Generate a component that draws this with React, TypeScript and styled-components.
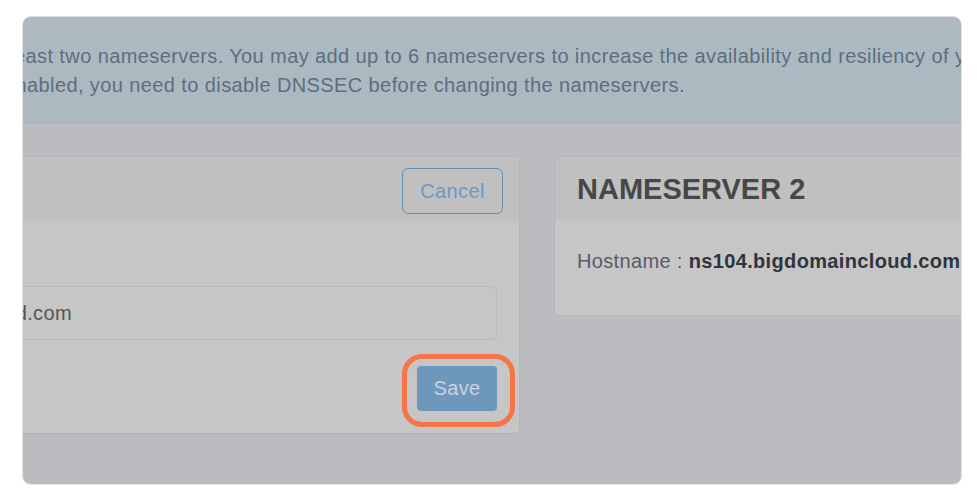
import { createGlobalStyle } from 'styled-components'
import styled from 'styled-components'

const GlobalStyle = createGlobalStyle`
   html, body {
      margin: 0;
      background: #ffffff;
      font-family: 'Liberation Sans', Arial, sans-serif;
   }
`

const App = () => {
   return (
      <>
         <GlobalStyle />
         <Frame>
            <Banner>
               <BannerLine $shift={-9}>
                  east two nameservers. You may add up to 6 nameservers to increase the availability and resiliency of your domain.
               </BannerLine>
               <BannerLine $shift={-7.5}>
                  nabled, you need to disable DNSSEC before changing the nameservers.
               </BannerLine>
            </Banner>

            <Cards>
               <Card>
                  <CardHeader $align='end'>
                     <CancelButton>Cancel</CancelButton>
                  </CardHeader>
                  <EditBody>
                     <Input readOnly value='ns103.bigdomaincloud.com' />
                     <Actions>
                        <Highlight>
                           <SaveButton>Save</SaveButton>
                        </Highlight>
                     </Actions>
                  </EditBody>
               </Card>

               <Card>
                  <CardHeader $align='start'>
                     <Title>NAMESERVER 2</Title>
                  </CardHeader>
                  <InfoBody>
                     Hostname : <strong>ns104.bigdomaincloud.com</strong>
                  </InfoBody>
               </Card>
            </Cards>
         </Frame>
      </>
   )
}

const Frame = styled.main`
   margin: 16px 0 0 22px;
   width: 940px;
   height: 469px;
   box-sizing: border-box;
   border: 1px solid #e3e3e5;
   border-radius: 9px;
   overflow: hidden;
   background: #bbbcc0;
`

const Banner = styled.section`
   padding: 25px 0 23px;
   background: #adb9c1;
   border-bottom: 1px solid #9fb9bf;
   color: #5b6f7f;
   font-size: 20px;
   letter-spacing: 0.4px;
   line-height: 29px;
   overflow: hidden;
`

const BannerLine = styled.div<{ $shift: number }>`
   margin-left: ${p => p.$shift}px;
   white-space: nowrap;
`

const Cards = styled.section`
   display: grid;
   grid-template-columns: 736px 460px;
   column-gap: 34px;
   align-items: start;
   margin-left: -239px;
   padding-top: 32px;
`

const Card = styled.article`
   border: 1px solid #b5b5b7;
   border-radius: 5px;
   background: #c6c6c6;
   overflow: hidden;
`

const CardHeader = styled.header<{ $align: 'start' | 'end' }>`
   display: flex;
   align-items: center;
   justify-content: ${p => (p.$align === 'end' ? 'flex-end' : 'flex-start')};
   height: 64px;
   padding: 0 16px 0 22px;
   background: #c0c0c0;
`

const Title = styled.h2`
   margin: 0;
   font-size: 29px;
   font-weight: bold;
   color: #474747;
`

const CancelButton = styled.button`
   width: 101px;
   height: 46px;
   margin-top: 4px;
   border: 1.5px solid #6292b9;
   border-radius: 6px;
   background: transparent;
   color: #6b9ac2;
   font-family: inherit;
   font-size: 20px;
   letter-spacing: 0.4px;
`

const EditBody = styled.div`
   display: flex;
   flex-direction: column;
   padding: 65px 22px 22px;
`

const Input = styled.input`
   height: 54px;
   box-sizing: border-box;
   padding: 0 12px;
   border: 1px solid #b9b9bb;
   border-radius: 5px;
   background: #c6c6c6;
   color: #555555;
   font-family: inherit;
   font-size: 20px;
   letter-spacing: 0.35px;
   outline: none;
`

const Actions = styled.div`
   display: flex;
   justify-content: flex-end;
   margin-top: 26px;
`

const Highlight = styled.div`
   position: relative;
   display: flex;

   &::after {
      content: '';
      position: absolute;
      left: -15px;
      right: -18px;
      top: -12px;
      bottom: -16px;
      border: 5px solid #f47547;
      border-radius: 20px;
      pointer-events: none;
   }
`

const SaveButton = styled.button`
   width: 80px;
   height: 45px;
   border: none;
   border-radius: 4px;
   background: #6e98bb;
   color: #c7d2dc;
   font-family: inherit;
   font-size: 20px;
   letter-spacing: 0.35px;
`

const InfoBody = styled.div`
   padding: 27px 22px 41px;
   font-size: 20px;
   letter-spacing: 0.35px;
   line-height: 26px;
   color: #585a6a;
   white-space: nowrap;

   strong {
      color: #30343c;
   }
`

export default App
